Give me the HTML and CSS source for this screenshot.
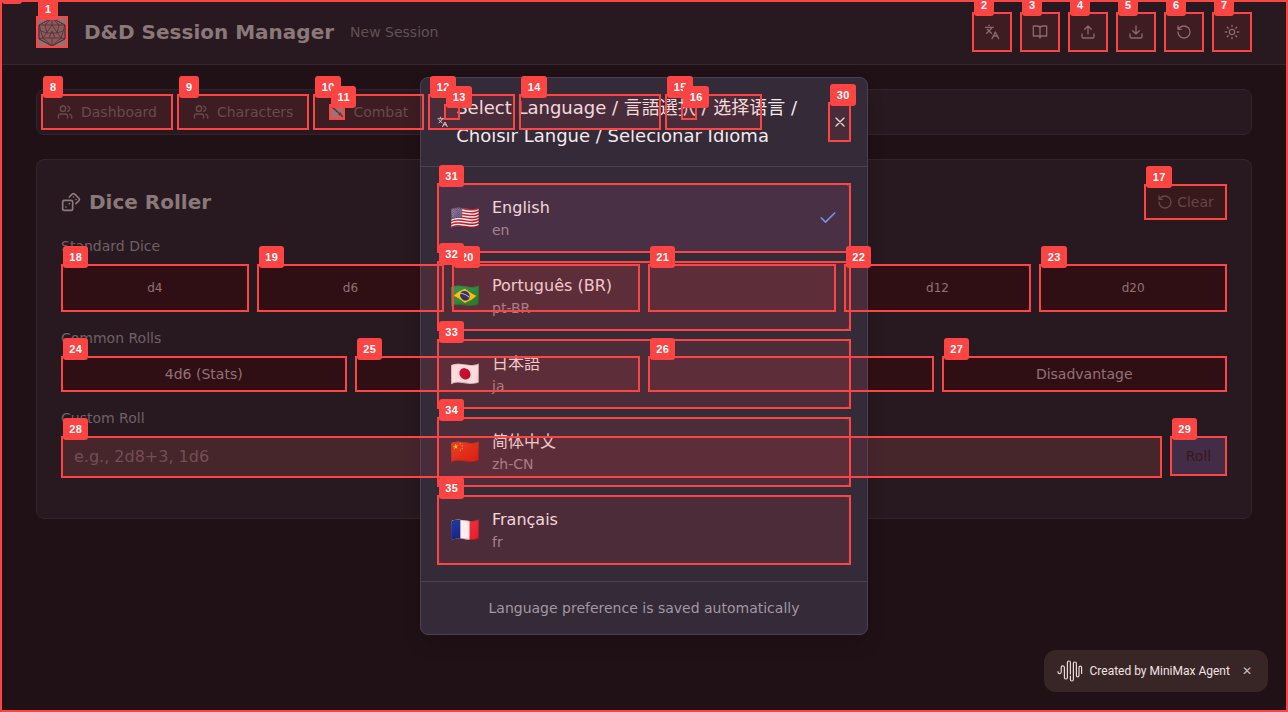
FILE: index.html
```html
<!DOCTYPE html>
<html lang="en">
<head>
<meta charset="utf-8">
<title>D&amp;D Session Manager</title>
<link rel="stylesheet" href="styles.css">
</head>
<body>
<svg class="defs" width="0" height="0">
  <symbol id="languages" viewBox="0 0 24 24"><path d="m5 8 6 6M4 14l6-6 2-3M2 5h12M7 2h1M22 22l-5-10-5 10M14 18h6"/></symbol>
  <symbol id="book" viewBox="0 0 24 24"><path d="M2 3h6a4 4 0 0 1 4 4v14a3 3 0 0 0-3-3H2zM22 3h-6a4 4 0 0 0-4 4v14a3 3 0 0 1 3-3h7z"/></symbol>
  <symbol id="upload" viewBox="0 0 24 24"><path d="M12 3v12M17 8l-5-5-5 5M21 15v4a2 2 0 0 1-2 2H5a2 2 0 0 1-2-2v-4"/></symbol>
  <symbol id="download" viewBox="0 0 24 24"><path d="M12 15V3M7 10l5 5 5-5M21 15v4a2 2 0 0 1-2 2H5a2 2 0 0 1-2-2v-4"/></symbol>
  <symbol id="rotate" viewBox="0 0 24 24"><path d="M3 12a9 9 0 1 0 9-9 9.75 9.75 0 0 0-6.74 2.74L3 8M3 3v5h5"/></symbol>
  <symbol id="sun" viewBox="0 0 24 24"><circle cx="12" cy="12" r="4"/><path d="M12 2v2M12 20v2M4.93 4.93l1.41 1.41M17.66 17.66l1.41 1.41M2 12h2M20 12h2M6.34 17.66l-1.41 1.41M19.07 4.93l-1.41 1.41"/></symbol>
  <symbol id="users" viewBox="0 0 24 24"><path d="M16 21v-2a4 4 0 0 0-4-4H6a4 4 0 0 0-4 4v2"/><circle cx="9" cy="7" r="4"/><path d="M22 21v-2a4 4 0 0 0-3-3.87M16 3.13a4 4 0 0 1 0 7.75"/></symbol>
  <symbol id="dices" viewBox="0 0 24 24"><rect width="12" height="12" x="2" y="10" rx="2" ry="2"/><path d="m17.92 14 3.5-3.5a2.24 2.24 0 0 0 0-3l-5-4.92a2.24 2.24 0 0 0-3 0L10 6M6 18h.01M10 14h.01M15 6h.01M18 9h.01"/></symbol>
  <symbol id="check" viewBox="0 0 24 24"><path d="M20 6 9 17l-5-5"/></symbol>
  <symbol id="close" viewBox="0 0 24 24"><path d="M18 6 6 18M6 6l12 12"/></symbol>
</svg>

<div class="app">
  <header class="header">
    <svg class="logo" viewBox="0 0 32 32"><rect width="32" height="32" class="logo-bg"/><path class="logo-body" d="M16 2 29 9v14L16 30 3 23V9z"/><path d="M16 2 29 9v14L16 30 3 23V9zM16 2v7M16 9 7 22h18zM3 9l13 0 13 0M3 9l4 13-4 1M29 9l-4 13 4 1M16 30 7 22M16 30l9-8M16 2 9 9M16 2l7 7M11 17l10 0M13 22l3-7 3 7M5 15l6 2M27 15l-6 2M16 22v8M9 9l2 8M23 9l-2 8"/></svg>
    <h1 class="title">D&amp;D Session Manager</h1>
    <span class="session">New Session</span>
    <div class="tools">
      <button class="tool"><svg class="icon"><use href="#languages"/></svg></button>
      <button class="tool"><svg class="icon"><use href="#book"/></svg></button>
      <button class="tool"><svg class="icon"><use href="#upload"/></svg></button>
      <button class="tool"><svg class="icon"><use href="#download"/></svg></button>
      <button class="tool"><svg class="icon"><use href="#rotate"/></svg></button>
      <button class="tool"><svg class="icon"><use href="#sun"/></svg></button>
    </div>
  </header>
  <main class="main">
    <nav class="tabs">
      <button class="tab"><svg class="icon"><use href="#users"/></svg>Dashboard</button>
      <button class="tab"><svg class="icon"><use href="#users"/></svg>Characters</button>
      <button class="tab"><svg class="sword" viewBox="0 0 16 16"><rect width="16" height="16"/><path d="m3 3 8 7M10 11l2-2M11 10l3 3"/></svg>Combat</button>
    </nav>
    <section class="card">
      <div class="card-head">
        <svg class="icon dice-icon"><use href="#dices"/></svg>
        <h2 class="title">Dice Roller</h2>
        <button class="clear"><svg class="icon"><use href="#rotate"/></svg>Clear</button>
      </div>
      <div class="group">
        <span class="label">Standard Dice</span>
        <div class="grid six">
          <button class="die">d4</button><button class="die">d6</button><button class="die"></button><button class="die"></button><button class="die">d12</button><button class="die">d20</button>
        </div>
      </div>
      <div class="group">
        <span class="label">Common Rolls</span>
        <div class="grid four">
          <button class="roll-type">4d6 (Stats)</button><button class="roll-type"></button><button class="roll-type"></button><button class="roll-type">Disadvantage</button>
        </div>
      </div>
      <div class="group">
        <span class="label">Custom Roll</span>
        <div class="custom">
          <input class="formula" placeholder="e.g., 2d8+3, 1d6">
          <button class="roll">Roll</button>
        </div>
      </div>
    </section>
  </main>
</div>

<div class="modal">
  <div class="modal-head">
    <svg class="icon lang-icon"><use href="#languages"/></svg>
    <h3 class="modal-title">Select Language / 言語選択 / 选择语言 / Choisir Langue / Selecionar Idioma</h3>
    <button class="close"><svg class="icon"><use href="#close"/></svg></button>
  </div>
  <div class="langs">
    <div class="lang active"><span class="flag">🇺🇸</span><div class="names"><span class="name">English</span><span class="code">en</span></div><svg class="icon check"><use href="#check"/></svg></div>
    <div class="lang"><span class="flag">🇧🇷</span><div class="names"><span class="name">Português (BR)</span><span class="code">pt-BR</span></div></div>
    <div class="lang"><span class="flag">🇯🇵</span><div class="names"><span class="name" lang="ja">日本語</span><span class="code">ja</span></div></div>
    <div class="lang"><span class="flag">🇨🇳</span><div class="names"><span class="name">简体中文</span><span class="code">zh-CN</span></div></div>
    <div class="lang"><span class="flag">🇫🇷</span><div class="names"><span class="name">Français</span><span class="code">fr</span></div></div>
  </div>
  <div class="modal-foot">Language preference is saved automatically</div>
</div>

<div class="toast">
  <svg class="wave" viewBox="0 0 26 22"><path d="M1 11.500v.5a1.600 1.600 0 0 0 3.200 0V7.500a1.600 1.600 0 0 1 3.200 0V17.500a1.500 1.500 0 0 0 3 0V2.500a1.500 1.500 0 0 1 3 0V14M13.400 16V19.500a1.500 1.500 0 0 0 3 0V3.500a1.500 1.500 0 0 1 3 0V15.500a1.300 1.300 0 0 0 2.600 0V7.500a1.300 1.300 0 0 1 2.600 0V13.500"/></svg>
  <span>Created by MiniMax Agent</span>
  <span class="toast-x">✕</span>
</div>

<div class="marks"></div>
<script src="marks.js"></script>
</body>
</html>
```

FILE: styles.css
```css
* { box-sizing: border-box; }
body {
  margin: 0; width: 1288px; height: 712px; overflow: hidden; position: relative;
  background: #201116; color: #8b7b7d;
  font: 14px/20px "DejaVu Sans", "Noto Sans CJK JP", "Noto Sans CJK SC", sans-serif;
}
button, input { font: inherit; border: 0; margin: 0; padding: 0; background: none; color: inherit; }
h1, h2, h3 { margin: 0; }
.defs { position: absolute; }
.icon { width: 16px; height: 16px; fill: none; stroke: currentColor; stroke-width: 2; stroke-linecap: round; stroke-linejoin: round; flex: none; }

.header { height: 65px; display: flex; align-items: center; padding: 0 36px; background: #27191f; border-bottom: 1px solid #35272c; }
.logo { width: 32px; height: 32px; margin-right: 16px; fill: none; stroke: #4b3035; stroke-width: .9; }
.logo-bg { fill: #8e7577; stroke: none; }
.logo-body { fill: #7b5e60; }
.title { font-size: 20px; line-height: 28px; font-weight: 700; color: #8b7878; }
.session { margin-left: 16px; color: #625055; }
.tools { display: flex; gap: 8px; margin-left: auto; }
.tool { width: 40px; height: 40px; display: flex; align-items: center; justify-content: center; color: #7d6d71; }

.main { padding: 24px 36px; display: flex; flex-direction: column; gap: 24px; }
.tabs { height: 46px; padding: 4px; display: flex; gap: 4px; background: #27191f; border: 1px solid #322429; border-radius: 8px; }
.tab { height: 36px; padding: 0 16px; display: flex; align-items: center; gap: 8px; color: #5b4a50; }
.sword { width: 16px; height: 16px; fill: #90797b; stroke: #402a30; stroke-width: 1.6; }
.card { height: 360px; padding: 24px; display: flex; flex-direction: column; gap: 16px; background: #27191f; border: 1px solid #322429; border-radius: 8px; }
.card-head { height: 36px; display: flex; align-items: center; gap: 8px; }
.dice-icon { width: 20px; height: 20px; }
.clear { margin-left: auto; width: 83px; height: 36px; display: flex; align-items: center; justify-content: center; gap: 4px; background: #211317; color: #56464b; border-radius: 6px; }
.group { display: flex; flex-direction: column; gap: 8px; }
.label { color: #706064; }
.grid { display: grid; gap: 8px; }
.six { grid-template-columns: repeat(6, 1fr); }
.four { grid-template-columns: repeat(4, 1fr); }
.die, .roll-type { background: #190a0f; color: #87767b; }
.die { height: 48px; font-size: 12px; }
.roll-type { height: 36px; }
.custom { display: flex; gap: 8px; align-items: flex-start; }
.formula { flex: 1; height: 42px; padding: 0 13px 2px; font-size: 16px; background: #312329; }
.formula::placeholder { color: #645057; opacity: 1; }
.roll { width: 57px; height: 40px; background: #2e2a47; color: #221219; }

.modal { position: absolute; left: 420px; top: 77px; width: 448px; background: #352a38; border: 1px solid #4b404d; border-radius: 8px; box-shadow: 0 10px 20px -8px #15090e70; }
.modal-head { padding: 16px; height: 89px; display: flex; align-items: center; border-bottom: 1px solid #4b404d; color: #ece0e4; }
.lang-icon { width: 11.2px; margin-right: 8px; }
.modal-title { flex: 1; font-size: 18px; line-height: 28px; font-weight: 400; color: #f3e9ed; }
.close { width: 23px; height: 40px; display: flex; align-items: center; justify-content: center; margin-left: 8px; }
.langs { padding: 16px; display: flex; flex-direction: column; gap: 8px; border-bottom: 1px solid #4b404d; }
.lang { height: 70px; padding: 12px; display: flex; align-items: center; gap: 12px; border: 1px solid #4b404d; border-radius: 8px; background: #372a37; }
.active { background: #362e46; border-color: #5265a8; }
.flag { width: 30px; font-size: 24px; line-height: 32px; }
.names { display: flex; flex-direction: column; flex: 1; }
.name { font-size: 16px; line-height: 24px; color: #f3e5e9; }
.code { color: #998b96; }
.check { width: 20px; height: 20px; color: #6f98ea; }
.modal-foot { padding: 16px; text-align: center; color: #a297a2; }

.toast { position: absolute; left: 1044px; top: 650px; width: 224px; height: 42px; padding: 0 14px 0 13px; display: flex; align-items: center; border-radius: 12px; background: #382626; color: #f2e2e2; font: 400 12px/16px Roboto, sans-serif; }
.wave { width: 26px; height: 22px; margin-right: 6.5px; fill: none; stroke: #e8d8d8; stroke-width: 1.2; stroke-linecap: round; }
.toast-x { margin-left: auto; width: 14px; text-align: center; color: #cbbaba; }

.marks { position: absolute; inset: 0; overflow: hidden; }
.box { position: absolute; border: 2px solid #ff4444; background: rgba(255, 68, 68, .1); }
.box.page { background: none; }
.tag { position: absolute; height: 22px; border-radius: 3px; background: #ff4444; color: #fff; text-align: center; font: bold 11px/22px "Liberation Sans", sans-serif; letter-spacing: .5px; text-indent: .5px; }
```

FILE: marks.js
```js
// Each entry: left, top, right, bottom, width of the number tag.
const marks = [
  [0, 0, 1288, 712, 20], [36, 16, 68, 48, 20],
  [972, 12, 1012, 52, 20], [1020, 12, 1060, 52, 20], [1068, 12, 1108, 52, 20],
  [1116, 12, 1156, 52, 20], [1164, 12, 1204, 52, 20], [1212, 12, 1252, 52, 20],
  [41, 94, 173, 130, 20], [177, 94, 309, 130, 20], [313, 94, 424, 130, 26],
  [329, 104, 345, 120, 25], [428, 94, 515, 130, 26], [444, 104, 460, 120, 26],
  [519, 94, 661, 130, 26], [665, 94, 762, 130, 26], [681, 104, 697, 120, 26],
  [1144, 184, 1227, 220, 26],
  [61, 264, 249, 312, 25], [257, 264, 444, 312, 25], [452, 264, 640, 312, 26],
  [648, 264, 836, 312, 25], [844, 264, 1031, 312, 25], [1039, 264, 1227, 312, 26],
  [61, 356, 347, 392, 25], [355, 356, 640, 392, 25], [648, 356, 934, 392, 25], [942, 356, 1227, 392, 25],
  [61, 436, 1162, 478, 25], [1170, 436, 1227, 476, 25],
  [828, 102, 851, 142, 26],
  [437, 183, 851, 253, 25], [437, 261, 851, 331, 25], [437, 339, 851, 409, 25],
  [437, 417, 851, 487, 25], [437, 495, 851, 565, 25]
];
const layer = document.querySelector('.marks');
const add = (cls, left, top, width, height, text) => {
  const el = document.createElement('div');
  el.className = cls;
  el.style.left = left + 'px';
  el.style.top = top + 'px';
  el.style.width = width + 'px';
  if (height) el.style.height = height + 'px';
  if (text) el.textContent = text;
  layer.append(el);
};
marks.forEach(([l, t, r, b], i) => add(i ? 'box' : 'box page', l, t, r - l, b - t));
marks.forEach(([l, t, , , w], i) => add('tag', l + 2, t - 18, w, 0, i ? String(i) : ''));
```
